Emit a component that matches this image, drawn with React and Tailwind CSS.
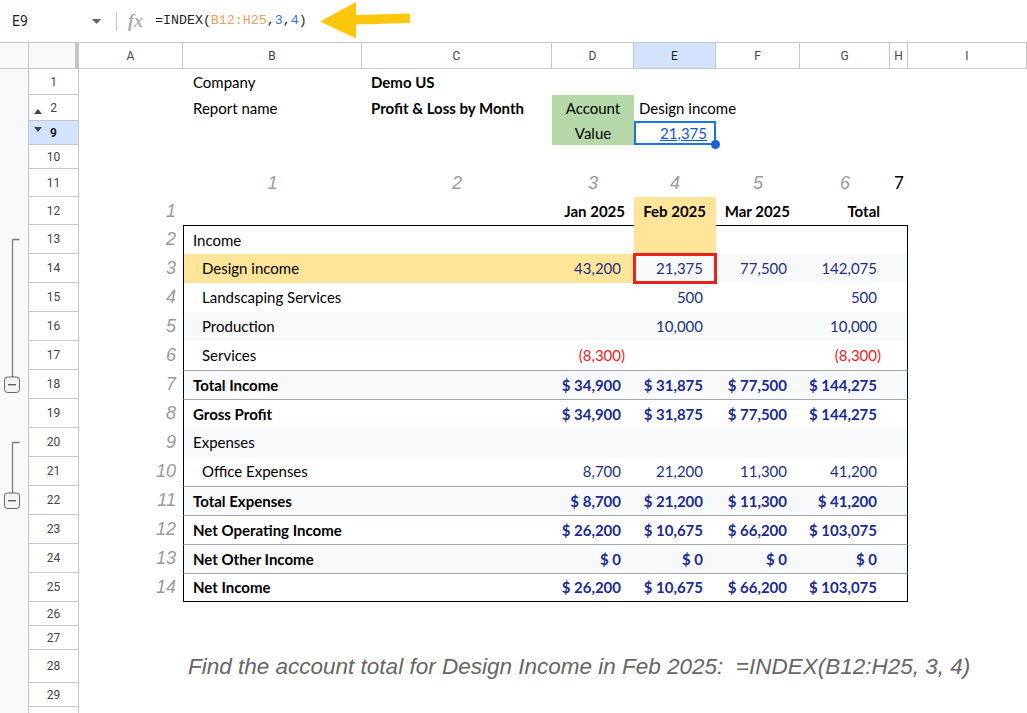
import React from 'react';

// column widths of the sheet
const W = {
    A: 'w-[104px]',
    B: 'w-[179px]',
    C: 'w-[190px]',
    D: 'w-[82px]',
    E: 'w-[82px]',
    F: 'w-[84px]',
    G: 'w-[90px]',
    H: 'w-[18px]',
    I: 'w-[119px]',
};

const COL_KEYS = ['A', 'B', 'C', 'D', 'E', 'F', 'G', 'H', 'I'];

const TOTAL_INCOME = ['$ 34,900', '$ 31,875', '$ 77,500', '$ 144,275'];
const NET = ['$ 26,200', '$ 10,675', '$ 66,200', '$ 103,075'];

const TABLE = [
    { n: 13, i: 2, label: 'Income', v: ['', '', '', ''], group: 'start' },
    { n: 14, i: 3, label: 'Design income', sub: true, hl: true, v: ['43,200', '21,375', '77,500', '142,075'], group: 'mid' },
    { n: 15, i: 4, label: 'Landscaping Services', sub: true, v: ['', '500', '', '500'], group: 'mid' },
    { n: 16, i: 5, label: 'Production', sub: true, v: ['', '10,000', '', '10,000'], group: 'mid' },
    { n: 17, i: 6, label: 'Services', sub: true, v: ['(8,300)', '', '', '(8,300)'], group: 'mid' },
    { n: 18, i: 7, label: 'Total Income', bold: true, line: true, v: TOTAL_INCOME, group: 'end' },
    { n: 19, i: 8, label: 'Gross Profit', bold: true, line: true, v: TOTAL_INCOME },
    { n: 20, i: 9, label: 'Expenses', v: ['', '', '', ''], group: 'start' },
    { n: 21, i: 10, label: 'Office Expenses', sub: true, v: ['8,700', '21,200', '11,300', '41,200'], group: 'mid' },
    { n: 22, i: 11, label: 'Total Expenses', bold: true, line: true, v: ['$ 8,700', '$ 21,200', '$ 11,300', '$ 41,200'], group: 'end' },
    { n: 23, i: 12, label: 'Net Operating Income', bold: true, line: true, v: NET },
    { n: 24, i: 13, label: 'Net Other Income', bold: true, line: true, v: ['$ 0', '$ 0', '$ 0', '$ 0'] },
    { n: 25, i: 14, label: 'Net Income', bold: true, line: true, v: NET },
];

const Cell = ({ w, className = '', children }) => (
    <div className={`${w} shrink-0 flex items-center whitespace-nowrap ${className}`}>{children}</div>
);

// grouping bracket in the left gutter
const Bracket = ({ kind }) => (
    <svg width="28" height="29" viewBox="0 0 28 29" className="block">
        {kind === 'start' && <path d="M12.5 14.5 H19.5 M12.5 14.5 V29" stroke="#7a7a7a" strokeWidth="1.3" fill="none" />}
        {kind === 'mid' && <path d="M12.5 0 V29" stroke="#7a7a7a" strokeWidth="1.3" fill="none" />}
        {kind === 'end' && (
            <>
                <path d="M12.5 0 V7" stroke="#7a7a7a" strokeWidth="1.3" fill="none" />
                <rect x="4.5" y="7" width="15" height="15.5" rx="3" fill="#f3f3f3" stroke="#666" strokeWidth="1" />
                <path d="M8 14.75 H16" stroke="#444" strokeWidth="1.2" />
            </>
        )}
    </svg>
);

const Row = ({ h, n, sel, up, down, group, children }) => (
    <div className={`flex ${h}`}>
        <div className="w-[28px] shrink-0 bg-[#f8f9fa]">{group && <Bracket kind={group} />}</div>
        <div
            className={`w-[51px] shrink-0 relative flex items-center justify-center border-x border-b border-[#c4c7c5] text-[12px] font-['Roboto',sans-serif]
            ${sel ? 'bg-[#d3e3fd] font-bold text-[#1f1f1f]' : 'bg-white text-[#444]'}`}
        >
            {up && <span className="absolute left-[5px] bottom-[6px] w-0 h-0 border-x-[4px] border-x-transparent border-b-[5px] border-b-[#444]" />}
            {down && <span className="absolute left-[5px] top-[6px] w-0 h-0 border-x-[4px] border-x-transparent border-t-[5px] border-t-[#444]" />}
            {n}
        </div>
        {children}
    </div>
);

const idxCls = "italic text-[18px] text-[#9a9a9a] font-['Liberation_Sans',sans-serif]";

const valCls = (v, bold) => {
    if (v.startsWith('(')) return 'pr-[9px] text-[#f21d1d]';
    return `pr-[13px] ${bold ? 'text-[#1b2b8e]' : 'text-[#22307f]'}`;
};

const TableRow = ({ r }) => {
    const light = r.n % 2 === 0;
    const top = r.n === 13 ? 'border-t border-t-black' : r.line ? 'border-t border-t-[#a2a6ad]' : '';
    const bottom = r.n === 25 ? 'border-b border-b-black' : '';
    const widths = [W.D, W.E, W.F, W.G];
    return (
        <Row h="h-[29px]" n={r.n} group={r.group}>
            <Cell w={W.A} className={`justify-end pr-[7px] ${idxCls}`}>{r.i}</Cell>
            <div className={`w-[725px] shrink-0 flex border-x border-x-black ${top} ${bottom} ${light ? 'bg-[#f8f9fb]' : 'bg-white'}`}>
                <div className={`flex-1 flex items-center whitespace-nowrap ${r.sub ? 'pl-[18px]' : 'pl-[9px]'} ${r.bold ? 'font-bold' : ''} ${r.hl ? 'bg-[#ffe599]' : ''}`}>
                    {r.label}
                </div>
                {r.v.map((v, k) => (
                    <div
                        key={k}
                        className={`${widths[k]} shrink-0 relative flex items-center justify-end ${r.bold ? 'font-bold' : ''} ${valCls(v, r.bold)}
                        ${r.hl && k === 0 ? 'bg-[#ffe599]' : ''} ${r.n === 13 && k === 1 ? 'bg-[#ffe599] -mt-px' : ''}`}
                    >
                        {v}
                        {r.hl && k === 1 && <span className="absolute -left-px -right-px -top-px -bottom-px border-[3px] border-[#e8231c]" />}
                    </div>
                ))}
                <div className="w-[17px] shrink-0" />
            </div>
        </Row>
    );
};

const FormulaBar = () => (
    <div className="h-[42px] flex items-center font-['Roboto',sans-serif]">
        <div className="w-[92px] shrink-0 pl-[12px] text-[14px] text-[#1f1f1f]">E9</div>
        <svg width="9" height="5" viewBox="0 0 9 5" className="shrink-0">
            <path d="M0 0 H9 L4.5 5 Z" fill="#5f6368" />
        </svg>
        <div className="ml-[15px] w-px h-[19px] bg-[#c4c7c5] shrink-0" />
        <div className="ml-[11px] w-[17px] shrink-0 italic font-bold text-[18px] leading-none text-[#adadad] font-['Liberation_Serif',serif]">fx</div>
        <div className="ml-[10px] text-[13.3px] font-['Liberation_Mono',monospace] text-[#1f1f1f] whitespace-nowrap">
            =INDEX(<span className="text-[#f0a05a]">B12:H25</span>,<span className="text-[#3a6fdc]">3</span>,<span className="text-[#3a6fdc]">4</span>)
        </div>
        <svg width="94" height="42" viewBox="0 0 94 42" className="ml-[11px] shrink-0">
            <path d="M2 21.5 L38 2 L38 15 L92 13.5 L92 23 L38 24.5 L38 38.5 Z" fill="#fcc70d" />
        </svg>
    </div>
);

const ColumnHeaders = () => (
    <div className="flex h-[27px] border-t border-[#c4c7c5] text-[12px] text-[#444] font-['Roboto',sans-serif]">
        <div className="w-[28px] shrink-0 bg-[#f8f9fa] border-b border-[#c4c7c5]" />
        <div className="w-[51px] shrink-0 bg-[#f8f9fa] border-l border-r-[4px] border-b border-[#c4c7c5]" />
        {COL_KEYS.map((c) => (
            <div
                key={c}
                className={`${W[c]} shrink-0 flex items-center justify-center border-r border-b border-[#c4c7c5] ${c === 'E' ? 'bg-[#d3e3fd] text-[#1f1f1f]' : 'bg-white'}`}
            >
                {c}
            </div>
        ))}
    </div>
);

export default function App() {
    return (
        <div className="w-[1027px] h-[713px] overflow-hidden bg-white text-[15px] text-black font-['Lato',sans-serif]">
            <FormulaBar />
            <ColumnHeaders />

            {/* rows 1, 2 and 9: header info */}
            <Row h="h-[26px]" n="1">
                <Cell w={W.A} />
                <Cell w={W.B} className="pl-[10px]">Company</Cell>
                <Cell w={W.C} className="pl-[9px] font-bold">Demo US</Cell>
            </Row>
            <Row h="h-[26px]" n="2" up>
                <Cell w={W.A} />
                <Cell w={W.B} className="pl-[10px]">Report name</Cell>
                <Cell w={W.C} className="pl-[9px] font-bold">Profit &amp; Loss by Month</Cell>
                <Cell w={W.D} className="justify-center bg-[#b6d7a8]">Account</Cell>
                <Cell w={W.E} className="pl-[5px]">Design income</Cell>
            </Row>
            <Row h="h-[24px]" n="9" sel down>
                <Cell w={W.A} />
                <Cell w={W.B} />
                <Cell w={W.C} />
                <Cell w={W.D} className="justify-center bg-[#b6d7a8]">Value</Cell>
                <Cell w={W.E} className="relative justify-end pr-[7px] border-2 border-[#1a73e8] text-[#1155cc] underline">
                    21,375
                    <span className="absolute -right-[6px] -bottom-[6px] w-[9px] h-[9px] rounded-full bg-[#1a5fd6]" />
                </Cell>
            </Row>
            <Row h="h-[24px]" n="10" />

            {/* column index row */}
            <Row h="h-[28px]" n="11">
                <Cell w={W.A} />
                {['B', 'C', 'D', 'E', 'F', 'G'].map((c, k) => (
                    <Cell key={c} w={W[c]} className={`justify-center ${idxCls}`}>{k + 1}</Cell>
                ))}
                <Cell w={W.H} className="justify-center text-[17px]">7</Cell>
            </Row>

            {/* month headings */}
            <Row h="h-[28px]" n="12">
                <Cell w={W.A} className={`justify-end pr-[7px] ${idxCls}`}>1</Cell>
                <Cell w={W.B} />
                <Cell w={W.C} />
                <Cell w={W.D} className="justify-end pr-[9px] font-bold">Jan 2025</Cell>
                <Cell w={W.E} className="justify-end pr-[10px] font-bold bg-[#ffe599]">Feb 2025</Cell>
                <Cell w={W.F} className="justify-end pr-[10px] font-bold">Mar 2025</Cell>
                <Cell w={W.G} className="justify-end pr-[10px] font-bold">Total</Cell>
            </Row>

            {TABLE.map((r) => (
                <TableRow key={r.n} r={r} />
            ))}

            <Row h="h-[24px]" n="26" />
            <Row h="h-[24px]" n="27" />
            <Row h="h-[33px]" n="28">
                <Cell w={W.A} />
                <Cell w={W.B} className="pl-[5px] italic text-[22.5px] text-[#666] font-['Liberation_Sans',sans-serif]">
                    Find the account total for Design Income in Feb 2025:&nbsp; =INDEX(B12:H25, 3, 4)
                </Cell>
            </Row>
            <Row h="h-[24px]" n="29" />
            <Row h="h-[24px]" n="" />
        </div>
    );
}
